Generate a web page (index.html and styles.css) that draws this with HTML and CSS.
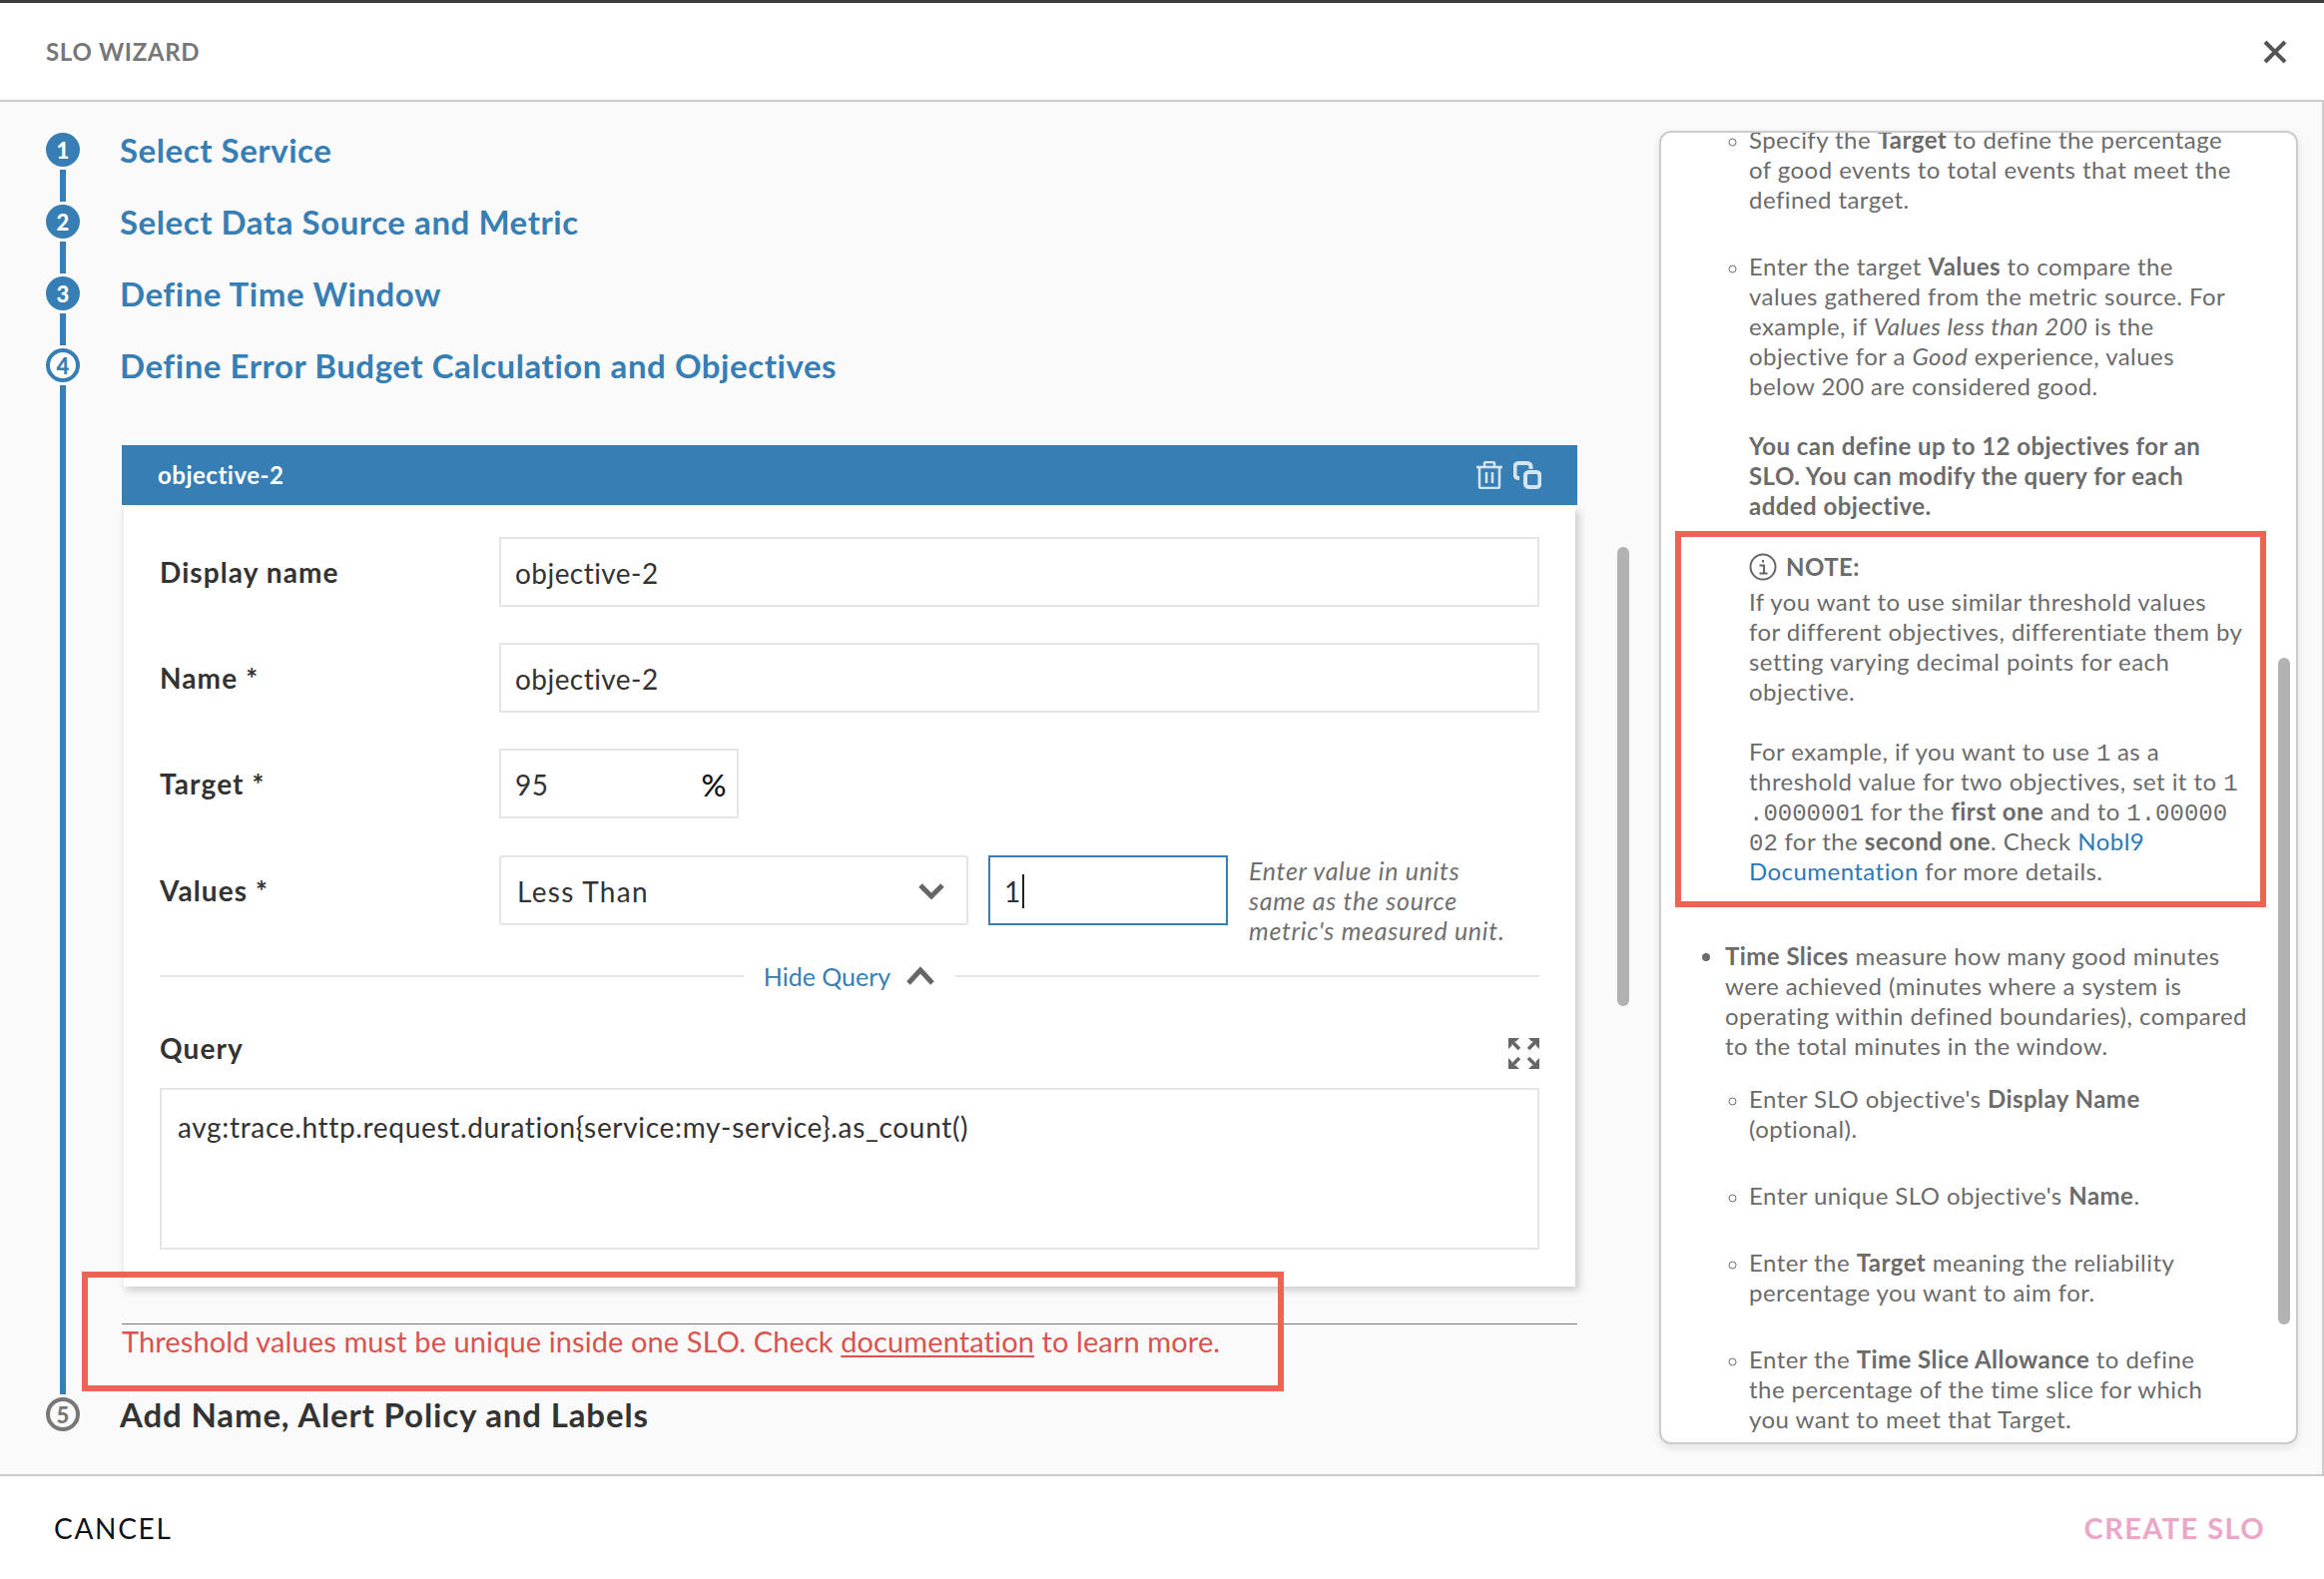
FILE: index.html
```html
<!DOCTYPE html>
<html lang="en">
<head>
    <meta charset="UTF-8">
    <title>SLO Wizard</title>
    <link rel="stylesheet" href="styles.css">
</head>
<body>
    <div class="wizard">
        <header class="wizard-head">
            <span class="wizard-title">SLO WIZARD</span>
            <svg class="close-icon" width="24" height="24" viewBox="0 0 24 24"><path d="M2 2l20 20M22 2L2 22"/></svg>
        </header>

        <main class="wizard-body">
            <section class="steps">
                <div class="step">
                    <div class="rail"><span class="dot">1</span><span class="rail-line"></span></div>
                    <h3 class="step-title">Select Service</h3>
                </div>
                <div class="step">
                    <div class="rail"><span class="dot">2</span><span class="rail-line"></span></div>
                    <h3 class="step-title">Select Data Source and Metric</h3>
                </div>
                <div class="step">
                    <div class="rail"><span class="dot">3</span><span class="rail-line"></span></div>
                    <h3 class="step-title">Define Time Window</h3>
                </div>
                <div class="step step-open">
                    <div class="rail"><span class="dot dot-current">4</span><span class="rail-line"></span></div>
                    <div class="step-main">
                        <h3 class="step-title">Define Error Budget Calculation and Objectives</h3>

                        <div class="objective">
                            <div class="objective-head">
                                <span>objective-2</span>
                                <div class="objective-tools">
                                    <svg width="28" height="28" viewBox="0 0 28 28" class="tool-icon"><path d="M1 6h26M9 6V2.500a1.500 1.500 0 0 1 1.500-1.500h7a1.500 1.500 0 0 1 1.500 1.500V6M4 6v19.500a1.500 1.500 0 0 0 1.500 1.500h17a1.500 1.500 0 0 0 1.500-1.500V6M11 11v11M17 11v11"/></svg>
                                    <svg width="28" height="28" viewBox="0 0 28 28" class="tool-icon tool-icon-thick"><path d="M6 17H5a3.500 3.500 0 0 1-3.500-3.500v-8A3.500 3.500 0 0 1 5 2h9a3.500 3.500 0 0 1 3.500 3.500V8"/><rect x="12" y="11" width="14.500" height="15" rx="3.500"/></svg>
                                </div>
                            </div>
                            <div class="objective-form">
                                <div class="form-row">
                                    <label class="form-label">Display name</label>
                                    <div class="field field-grow">objective-2</div>
                                </div>
                                <div class="form-row">
                                    <label class="form-label">Name *</label>
                                    <div class="field field-grow">objective-2</div>
                                </div>
                                <div class="form-row form-row-target">
                                    <label class="form-label">Target *</label>
                                    <div class="field field-target"><span>95</span><span class="field-unit">%</span></div>
                                </div>
                                <div class="form-row form-row-values">
                                    <label class="form-label">Values *</label>
                                    <div class="field field-select">
                                        <span>Less Than</span>
                                        <svg width="26" height="16" viewBox="0 0 26 16" class="chevron"><path d="M2 2l11 11L24 2"/></svg>
                                    </div>
                                    <div class="field field-value"><span>1</span><span class="caret"></span></div>
                                    <p class="field-help">Enter value in units<br>same as the source<br>metric's measured unit.</p>
                                </div>
                                <div class="query-toggle">
                                    <span class="rule"></span>
                                    <span class="query-link">Hide Query</span>
                                    <svg width="30" height="20" viewBox="0 0 30 20" class="chevron"><path d="M3 17L15 4l12 13"/></svg>
                                    <span class="rule"></span>
                                </div>
                                <div class="query-head">
                                    <label class="form-label">Query</label>
                                    <svg width="31" height="31" viewBox="0 0 31 31" class="expand-icon">
                                        <path class="expand-fill" d="M0 0h11l-3.500 3.500H3.500v4L0 11zM31 0H20l3.500 3.500h4v4L31 11zM0 31V20l3.500 3.500v4h4L11 31zM31 31H20l3.500-3.500h4v-4L31 20z"/>
                                        <path d="M3 3l8 8M28 3l-8 8M3 28l8-8M28 28l-8-8"/>
                                    </svg>
                                </div>
                                <div class="query-box">avg:trace.http.request.duration{service:my-service}.as_count()</div>
                            </div>
                        </div>

                        <div class="threshold-error">Threshold values must be unique inside one SLO. Check <u>documentation</u> to learn more.</div>
                    </div>
                </div>
                <div class="step step-last">
                    <div class="rail"><span class="dot dot-todo">5</span></div>
                    <h3 class="step-title">Add Name, Alert Policy and Labels</h3>
                </div>
                <span class="mark mark-error"></span>
                <span class="thumb thumb-main"></span>
            </section>

            <aside class="help-panel">
                <div class="help-scroll">
                    <ul class="help-sub help-sub-first">
                        <li>Specify the <b>Target</b> to define the percentage<br>of good events to total events that meet the<br>defined target.</li>
                        <li>Enter the target <b>Values</b> to compare the<br>values gathered from the metric source. For<br>example, if <i>Values less than 200</i> is the<br>objective for a <i>Good</i> experience, values<br>below 200 are considered good.</li>
                    </ul>
                    <p class="help-strong">You can define up to 12 objectives for an<br>SLO. You can modify the query for each<br>added objective.</p>
                    <div class="help-note">
                        <div class="note-head">
                            <svg width="28" height="28" viewBox="0 0 28 28" class="note-icon"><circle cx="14" cy="14" r="12.500"/><path d="M10.500 12.500H15V20M10.500 20.500h8M14 7v2.500"/></svg>
                            <b>NOTE:</b>
                        </div>
                        <p>If you want to use similar threshold values<br>for different objectives, differentiate them by<br>setting varying decimal points for each<br>objective.</p>
                        <p>For example, if you want to use <code>1</code> as a<br>threshold value for two objectives, set it to <code>1</code><br><code>.0000001</code> for the <b>first one</b> and to <code>1.00000</code><br><code>02</code> for the <b>second one</b>. Check <a href="#">Nobl9</a><br><a href="#">Documentation</a> for more details.</p>
                    </div>
                    <ul class="help-top">
                        <li><b>Time Slices</b> measure how many good minutes<br>were achieved (minutes where a system is<br>operating within defined boundaries), compared<br>to the total minutes in the window.</li>
                    </ul>
                    <ul class="help-sub help-sub-slices">
                        <li>Enter SLO objective's <b>Display Name</b><br>(optional).</li>
                        <li>Enter unique SLO objective's <b>Name</b>.</li>
                        <li>Enter the <b>Target</b> meaning the reliability<br>percentage you want to aim for.</li>
                        <li>Enter the <b>Time Slice Allowance</b> to define<br>the percentage of the time slice for which<br>you want to meet that Target.</li>
                    </ul>
                </div>
                <span class="thumb thumb-panel"></span>
                <span class="mark mark-note"></span>
            </aside>
        </main>

        <footer class="wizard-foot">
            <span class="btn-cancel">CANCEL</span>
            <span class="btn-create">CREATE SLO</span>
        </footer>
    </div>
</body>
</html>
```

FILE: styles.css
```css
* { box-sizing: border-box; }
html, body { margin: 0; height: 100%; }
body {
    font-family: Lato, "Open Sans", sans-serif;
    color: #333;
    background: #fff;
    overflow: hidden;
}
.wizard {
    height: 1582px;
    display: flex;
    flex-direction: column;
    border-top: 3px solid #3c3c3c;
}

/* header */
.wizard-head {
    height: 99px;
    flex: none;
    display: flex;
    align-items: center;
    justify-content: space-between;
    padding: 0 37px 0 46px;
    border-bottom: 2px solid #ccc;
}
.wizard-title { font-size: 24px; font-weight: 700; color: #777; letter-spacing: 0.7px; }
.close-icon path { fill: none; stroke: #555; stroke-width: 4; }

/* body */
.wizard-body {
    flex: 1;
    display: flex;
    background: #fafafa;
    position: relative;
    min-height: 0;
    border-right: 2px solid #ccc;
}
.steps {
    width: 1662px;
    flex: none;
    padding: 31px 0 0 46px;
    position: relative;
}
.step { display: flex; height: 72px; }
.step-open { height: 1051px; }
.step-last { height: 40px; }
.rail {
    width: 34px;
    flex: none;
    display: flex;
    flex-direction: column;
    align-items: center;
}
.dot {
    width: 34px;
    height: 34px;
    flex: none;
    border-radius: 50%;
    background: #377eb5;
    color: #fff;
    font-size: 22px;
    font-weight: 900;
    display: flex;
    align-items: center;
    justify-content: center;
}
.dot-current { background: #fff; color: #377eb5; border: 4px solid #377eb5; }
.dot-todo { background: none; color: #777; border: 4px solid #777; }
.rail-line { width: 6px; flex: 1; background: #377eb5; margin: 3px 0; }
.step-title {
    margin: 0 0 0 40px;
    font-size: 33px;
    line-height: 34px;
    font-weight: 700;
    letter-spacing: 0.55px;
    color: #377eb5;
}
.step-last .step-title { color: #333; letter-spacing: 0.85px; }
.step-main { flex: 1; min-width: 0; }
.step-main .step-title { margin-bottom: 63px; }

/* objective card */
.objective { margin-left: 42px; width: 1458px; }
.objective-head {
    height: 60px;
    background: #377eb5;
    color: #fff;
    font-size: 24px;
    font-weight: 700;
    letter-spacing: 0.5px;
    display: flex;
    align-items: center;
    justify-content: space-between;
    padding: 0 36px 1px;
}
.objective-tools { display: flex; gap: 10px; }
.tool-icon path, .tool-icon rect { fill: none; stroke: #d6e5f2; stroke-width: 2.5; }
.tool-icon-thick path, .tool-icon-thick rect { stroke-width: 4; }
.objective-form {
    width: 1456px;
    height: 781px;
    margin-top: 2px;
    padding: 30px 36px 0 36px;
    background: #fff;
    box-shadow: 4px 4px 8px rgba(0, 0, 0, 0.18);
    border-left: 2px solid #eee;
}
.form-row {
    display: flex;
    align-items: center;
    height: 70px;
    margin-bottom: 36px;
}
.form-row-target { margin-bottom: 37px; }
.form-label {
    width: 340px;
    flex: none;
    font-size: 28px;
    font-weight: 700;
    letter-spacing: 1.1px;
    color: #333;
}
.field {
    height: 70px;
    border: 2px solid #e5e5e5;
    background: #fff;
    padding: 1px 14px 0;
    font-size: 28px;
    letter-spacing: 0.45px;
    color: #333;
    display: flex;
    align-items: center;
}
.field-grow { flex: 1; }
.field-target { width: 240px; justify-content: space-between; padding-right: 10px; }
.field-unit { font-size: 31px; font-weight: 500; color: #111; }
.form-row-values { margin-bottom: 0; position: relative; }
.field-select {
    width: 470px;
    justify-content: space-between;
    padding: 1px 22px 0 16px;
    border-radius: 3px;
    letter-spacing: 1.3px;
}
.field-value {
    width: 240px;
    margin-left: 20px;
    border-color: #377eb5;
}
.caret { width: 2px; height: 34px; background: #222; margin-left: 1px; }
.chevron path { fill: none; stroke: #666; stroke-width: 5; }
.field-help {
    margin: 0 0 0 21px;
    font-size: 25px;
    line-height: 30px;
    font-style: italic;
    letter-spacing: 0.72px;
    color: #6f6f6f;
    align-self: flex-start;
}
.query-toggle {
    display: flex;
    align-items: center;
    height: 36px;
    margin-top: 33px;
}
.rule { flex: 1; height: 2px; background: #e5e5e5; }
.query-link { margin: 0 15px 0 20px; font-size: 25px; color: #377eb5; }
.query-toggle .chevron { margin-right: 20px; }
.query-head {
    display: flex;
    align-items: center;
    justify-content: space-between;
    height: 40px;
    margin-top: 34px;
}
.expand-icon { margin-top: 11px; }
.expand-icon path { fill: none; stroke: #666; stroke-width: 3.5; }
.expand-icon .expand-fill { fill: #666; stroke: none; }
.query-box {
    height: 162px;
    margin-top: 20px;
    border: 2px solid #e5e5e5;
    padding: 20px 16px;
    font-size: 28px;
    letter-spacing: 0.67px;
    color: #333;
}

/* error */
.threshold-error {
    margin: 37px 0 0 42px;
    width: 1458px;
    border-top: 1px solid #777;
    font-size: 29px;
    line-height: 34px;
    letter-spacing: 0.1px;
    color: #d9534f;
}
.threshold-error u { text-underline-offset: 3px; }

/* annotation boxes and scroll thumbs */
.mark { position: absolute; border: 6px solid #ec6453; pointer-events: none; }
.mark-error { left: 82px; top: 1172px; width: 1204px; height: 120px; }
.mark-note { left: 14px; top: 399px; width: 592px; height: 377px; }
.thumb { position: absolute; width: 12px; border-radius: 6px; background: #b2b2b2; }
.thumb-main { left: 1620px; top: 446px; height: 460px; }
.thumb-panel { left: 618px; top: 526px; height: 668px; }

/* right help panel */
.help-panel {
    position: relative;
    width: 640px;
    height: 1316px;
    margin-top: 29px;
    background: #fff;
    border: 2px solid #ccc;
    border-radius: 12px;
    box-shadow: 0 3px 8px rgba(0, 0, 0, 0.1);
    overflow: hidden;
}
.help-scroll {
    margin-top: -8px;
    font-size: 24px;
    line-height: 30px;
    letter-spacing: 0.45px;
    color: #6b6b6b;
    white-space: nowrap;
}
.help-scroll b { font-weight: 700; }
.help-scroll a { color: #2b79b9; text-decoration: none; }
.help-scroll code { font-family: "Liberation Mono", monospace; font-size: 24px; line-height: 20px; letter-spacing: 0; }
.help-scroll ul { margin: 0; padding: 0; }
.help-sub { list-style: circle; padding-left: 88px !important; }
.help-sub li { margin-bottom: 37px; }
.help-sub-first li:last-child { margin-bottom: 30px; }
.help-sub li::marker { font-size: 20px; }
.help-strong { margin: 0 0 0 88px; font-weight: 700; }
.help-note { margin: 32px 0 0 88px; }
.note-head { display: flex; align-items: center; gap: 9px; height: 28px; margin-bottom: 6px; }
.note-icon circle, .note-icon path { fill: none; stroke: #666; stroke-width: 2; }
.help-note p { margin: 0 0 30px; }
.help-top { list-style: disc; padding-left: 64px !important; margin-top: 55px !important; }
.help-sub-slices { margin-top: 23px !important; }

/* footer */
.wizard-foot {
    height: 105px;
    flex: none;
    display: flex;
    align-items: center;
    justify-content: space-between;
    padding: 0 59px 0 54px;
    background: #fff;
    border-top: 2px solid #ccc;
    font-size: 28px;
}
.btn-cancel { color: #111; letter-spacing: 1.7px; }
.btn-create { color: #eba6c8; font-weight: 700; font-size: 29px; letter-spacing: 1.4px; }
```
